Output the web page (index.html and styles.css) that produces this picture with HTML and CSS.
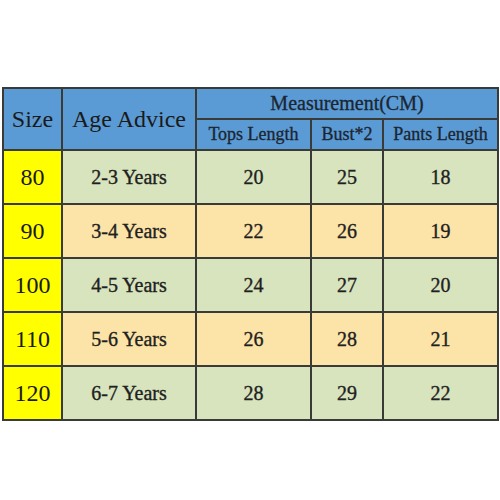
FILE: index.html
```html
<!DOCTYPE html>
<html lang="en">
<head>
    <meta charset="UTF-8">
    <title>Size Chart</title>
    <link rel="stylesheet" href="styles.css">
</head>
<body>
    <table class="chart">
        <colgroup>
            <col class="c-size">
            <col class="c-age">
            <col class="c-tops">
            <col class="c-bust">
            <col class="c-pants">
        </colgroup>
        <thead>
            <tr class="head-top">
                <th rowspan="2" class="big">Size</th>
                <th rowspan="2" class="big">Age Advice</th>
                <th colspan="3" class="group">Measurement(CM)</th>
            </tr>
            <tr class="head-sub">
                <th>Tops Length</th>
                <th>Bust*2</th>
                <th>Pants Length</th>
            </tr>
        </thead>
        <tbody>
            <tr class="green">
                <td class="size">80</td><td>2-3 Years</td><td>20</td><td>25</td><td>18</td>
            </tr>
            <tr class="orange">
                <td class="size">90</td><td>3-4 Years</td><td>22</td><td>26</td><td>19</td>
            </tr>
            <tr class="green">
                <td class="size">100</td><td>4-5 Years</td><td>24</td><td>27</td><td>20</td>
            </tr>
            <tr class="orange">
                <td class="size">110</td><td>5-6 Years</td><td>26</td><td>28</td><td>21</td>
            </tr>
            <tr class="green">
                <td class="size">120</td><td>6-7 Years</td><td>28</td><td>29</td><td>22</td>
            </tr>
        </tbody>
    </table>
</body>
</html>
```
FILE: styles.css
```css
* {
    margin: 0;
    padding: 0;
    box-sizing: border-box;
}

body {
    background: #fff;
    font-family: 'Liberation Serif', 'Times New Roman', serif;
    color: #1a1a1a;
    padding: 87px 0 0 2px;
}

.chart {
    width: 495px;
    table-layout: fixed;
    border-collapse: collapse;
    border: 2px solid #3a3a36;
}

.c-size { width: 59px; }
.c-age { width: 134px; }
.c-tops { width: 115px; }
.c-bust { width: 72px; }
.c-pants { width: 115px; }

th, td {
    border: 2px solid #3a3a36;
    text-align: center;
    vertical-align: middle;
    font-weight: normal;
}

thead th {
    background: #5b9bd5;
    font-size: 18px;
    color: #1c2530;
    -webkit-text-stroke: 0.3px #1c2530;
}

thead th.group {
    font-size: 20px;
}

thead th.big {
    font-size: 24px;
    -webkit-text-stroke: 0;
    color: #1a1a1a;
}

.head-top { height: 31px; }
.head-sub { height: 31px; }

tbody tr { height: 54px; }

tbody td {
    font-size: 20px;
    color: #1f1f1f;
    -webkit-text-stroke: 0.35px #1f1f1f;
}

.green td { background: #d7e4bd; }
.orange td { background: #fce4a8; }

tbody td.size {
    background: #ffff00;
    font-size: 24px;
    -webkit-text-stroke: 0;
    color: #1a1a1a;
}
```
